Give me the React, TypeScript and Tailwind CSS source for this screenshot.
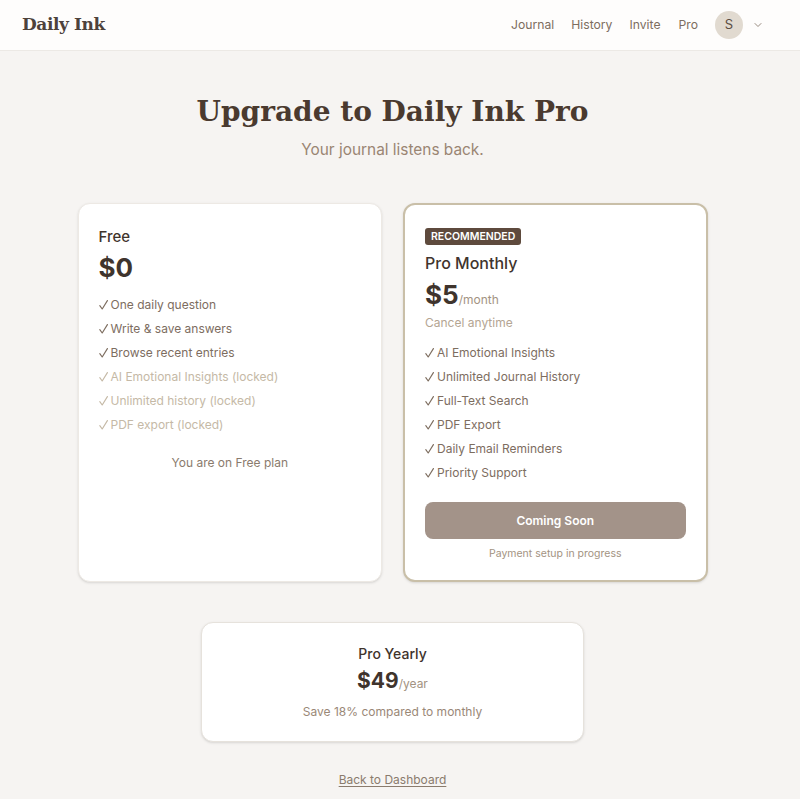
import { ChevronDown } from "lucide-react";

const freeFeatures = [
  { label: "One daily question", locked: false },
  { label: "Write & save answers", locked: false },
  { label: "Browse recent entries", locked: false },
  { label: "AI Emotional Insights (locked)", locked: true },
  { label: "Unlimited history (locked)", locked: true },
  { label: "PDF export (locked)", locked: true },
];

const proFeatures = [
  "AI Emotional Insights",
  "Unlimited Journal History",
  "Full-Text Search",
  "PDF Export",
  "Daily Email Reminders",
  "Priority Support",
];

const serif = "font-['DejaVu_Serif',serif]";

// thin tick drawn before every feature line
const Check = () => (
  <svg width="9" height="10" viewBox="0 0 9 10" className="inline-block mr-[3px] align-[-1px]" fill="none">
    <path d="M0.8 5.6 L3.2 9 L8.4 0.6" stroke="currentColor" strokeWidth="1.15" strokeLinecap="round" strokeLinejoin="round" />
  </svg>
);

const Header = () => (
  <header className="h-[51px] bg-[#fefdfc] border-b border-[#ece9e5] flex items-center justify-between pl-[22px] pr-[36px]">
    <div className={`${serif} text-[17px] font-bold text-[#4d423b] tracking-tight`}>
      Daily Ink
    </div>
    <nav className="flex items-center text-[12.2px] text-[#7d6d5f]">
      <a className="mr-[17px]">Journal</a>
      <a className="mr-[17px]">History</a>
      <a className="mr-[18px]">Invite</a>
      <a className="mr-[17px]">Pro</a>
      <div className="w-[28px] h-[28px] rounded-full bg-[#e1dad0] flex items-center justify-center text-[13px] text-[#5a4d43]">
        S
      </div>
      <ChevronDown className="ml-[9px] w-[12px] h-[12px] text-[#7d6d5f]" strokeWidth={1.6} />
    </nav>
  </header>
);

const App = () => {
  return (
    <div className="min-h-screen bg-[#f6f4f2] font-['Inter',sans-serif] text-[#4a3d34]">
      <Header />
      <main className="flex flex-col items-center pt-[43px] pb-[14px] pr-[15px]">
        <h1 className={`${serif} text-[28px] font-bold text-[#4a3a2f] leading-tight`}>
          Upgrade to Daily Ink Pro
        </h1>
        <p className="mt-[9px] text-[15.4px] text-[#9a8573]">Your journal listens back.</p>

        <div className="mt-[42px] grid grid-cols-2 gap-[21px] w-[630px]">
          {/* free plan */}
          <div className="bg-white rounded-xl border border-[#ede9e4] shadow-sm px-[20px] pt-[23px] pb-6 flex flex-col">
            <h2 className="text-[15px] font-medium text-[#3f342d] leading-[20px]">Free</h2>
            <div className="mt-[8px] text-[26px] font-bold text-[#3f342d] leading-none">$0</div>
            <ul className="mt-[15px] flex flex-col gap-[6px] text-[12px] leading-[18px]">
              {freeFeatures.map((f) => (
                <li key={f.label} className={f.locked ? "text-[#c5b9a6]" : "text-[#7d6d5f]"}>
                  <Check />
                  {f.label}
                </li>
              ))}
            </ul>
            <p className="mt-[20px] text-center text-[12px] text-[#8a7b6d]">You are on Free plan</p>
          </div>

          {/* monthly plan */}
          <div className="bg-white rounded-xl border-2 border-[#c9bfa8] shadow-sm px-[20px] pt-[23px] pb-[18px] flex flex-col">
            <span className="self-start bg-[#5e4a3d] text-white text-[10.5px] leading-[15px] font-semibold uppercase rounded-[3px] px-[6px] py-[1px]">
              Recommended
            </span>
            <h2 className="mt-[7px] text-[16px] font-medium text-[#3f342d] leading-[22px]">Pro Monthly</h2>
            <div className="mt-[8px] flex items-baseline">
              <span className="text-[26px] font-bold text-[#3f342d] leading-none">$5</span>
              <span className="text-[12px] text-[#a39382]">/month</span>
            </div>
            <p className="mt-[5px] text-[12px] leading-[18px] text-[#b4a593]">Cancel anytime</p>
            <ul className="mt-[12px] flex flex-col gap-[6px] text-[12px] leading-[18px] text-[#7d6d5f]">
              {proFeatures.map((f) => (
                <li key={f}>
                  <Check />
                  {f}
                </li>
              ))}
            </ul>
            <button className="mt-[20px] h-[37px] w-full rounded-lg bg-[#a39389] text-white text-[12px] font-semibold">
              Coming Soon
            </button>
            <p className="mt-[7px] text-center text-[10.5px] text-[#a39382]">Payment setup in progress</p>
          </div>
        </div>

        {/* yearly plan */}
        <div className="mt-[40px] w-[383px] bg-white rounded-xl border border-[#e6e2dc] shadow-sm pt-[21px] pb-[20px] flex flex-col items-center">
          <h2 className="text-[14px] font-medium text-[#3f342d] leading-[20px]">Pro Yearly</h2>
          <div className="mt-[3px] flex items-baseline">
            <span className="text-[21px] font-bold text-[#3f342d] leading-[28px]">$49</span>
            <span className="text-[12px] text-[#a39382]">/year</span>
          </div>
          <p className="mt-[8px] text-[12px] text-[#9a8877]">Save 18% compared to monthly</p>
        </div>

        <a className="mt-[29px] text-[12px] text-[#8a7b6d] underline underline-offset-2">Back to Dashboard</a>
      </main>
    </div>
  );
};

export default App;
